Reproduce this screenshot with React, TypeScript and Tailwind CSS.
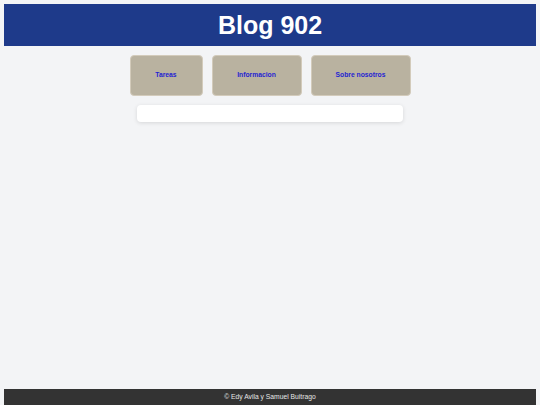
import React from "react"

const links = [
  { label: "Tareas", width: "w-[73px]" },
  { label: "Informacion", width: "w-[90px]" },
  { label: "Sobre nosotros", width: "w-[100px]" },
]

export default function App() {
  return (
    <div className="flex h-screen flex-col bg-[#f3f4f6] px-[4px] pt-[4px] font-['Liberation_Sans',Arial,sans-serif]">
      <header className="flex h-[42px] items-center justify-center bg-[#1e3a8a]">
        <h1 className="text-[25px] font-bold leading-none text-white">Blog 902</h1>
      </header>

      <main className="flex flex-1 flex-col items-center pt-[9px]">
        <nav className="flex gap-[9px]">
          {links.map((link) => (
            <a
              key={link.label}
              href="#"
              className={`flex h-[41px] ${link.width} items-center justify-center rounded-[4px] border border-[#d3cbbb] bg-[#b9b2a0] text-[6.75px] font-bold text-[#2424d2]`}
            >
              {link.label}
            </a>
          ))}
        </nav>
        <section className="mt-[9px] h-[17px] w-[266px] rounded-[4px] bg-white shadow-[0_1px_4px_rgba(0,0,0,0.12)]" />
      </main>

      <footer className="flex h-[16px] items-center justify-center bg-[#333333]">
        <p className="text-[6.75px] text-[#e6e6e6]">&copy; Edy Avila y Samuel Buitrago</p>
      </footer>
    </div>
  )
}
